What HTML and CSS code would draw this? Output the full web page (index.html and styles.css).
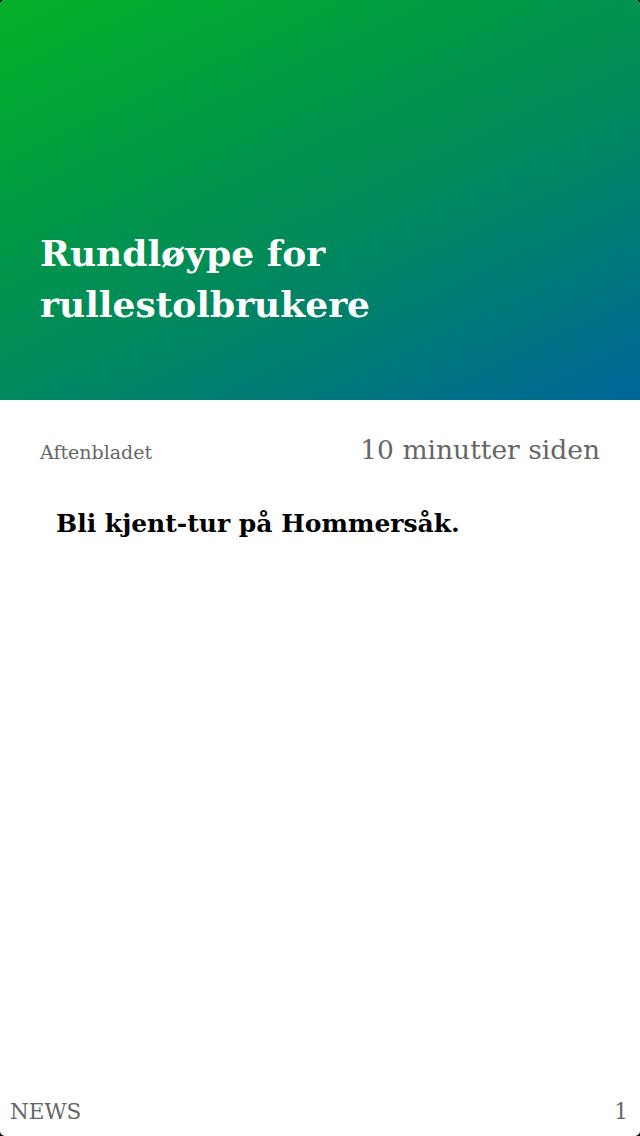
FILE: index.html
```
<!DOCTYPE html>
<html lang="no">
<head>
<meta charset="utf-8">
<link rel="stylesheet" href="styles.css">
</head>
<body>
<div class="screen">
  <header class="hero">
    <h1 class="hero-title">Rundløype for rullestolbrukere</h1>
  </header>
  <main class="content">
    <div class="meta">
      <span class="source">Aftenbladet</span>
      <span class="time">10 minutter siden</span>
    </div>
    <p class="lead">Bli kjent-tur på Hommersåk.</p>
  </main>
  <footer class="footer">
    <span class="section">NEWS</span>
    <span class="page">1</span>
  </footer>
</div>
</body>
</html>
```
FILE: styles.css
```
html, body {
  margin: 0;
  padding: 0;
  background: #000;
}
.screen {
  width: 640px;
  height: 1136px;
  background: #fff;
  border-radius: 5px;
  overflow: hidden;
  display: flex;
  flex-direction: column;
  font-family: "DejaVu Serif", "Liberation Serif", serif;
}
.hero {
  height: 400px;
  box-sizing: border-box;
  background: linear-gradient(155deg, #03b126 0%, #008a5a 55%, #00679a 100%);
  display: flex;
  align-items: flex-end;
  padding: 0 40px 70px 40px;
}
.hero-title {
  margin: 0;
  color: #fff;
  font-size: 36px;
  line-height: 51px;
  font-weight: bold;
  width: 440px;
}
.content {
  flex: 1;
  padding: 34px 40px 0 40px;
}
.meta {
  display: flex;
  justify-content: space-between;
  align-items: baseline;
  color: #666;
}
.source {
  font-size: 19px;
}
.time {
  font-size: 26.5px;
}
.lead {
  margin: 44px 0 0 16px;
  font-size: 25px;
  font-weight: bold;
  color: #000;
}
.footer {
  display: flex;
  justify-content: space-between;
  align-items: baseline;
  padding: 0 12px 12px 10px;
  color: #666;
  font-size: 21.5px;
}
```
